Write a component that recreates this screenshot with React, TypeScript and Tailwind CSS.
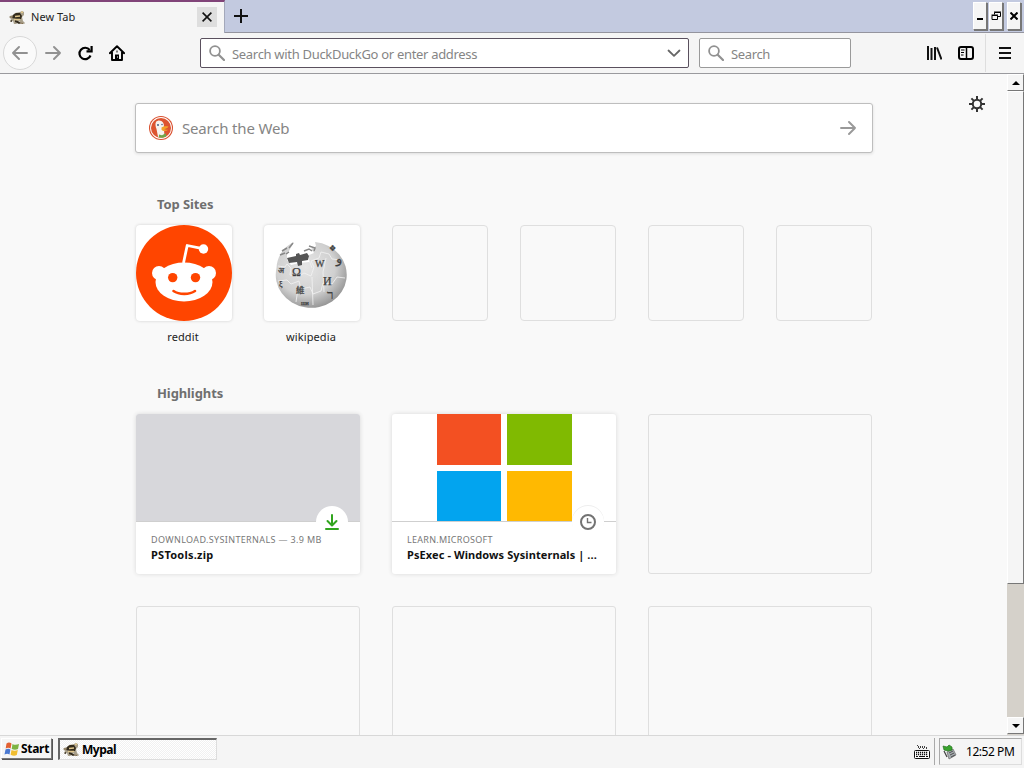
import type { ReactNode } from "react";

const raised =
  "border border-t-white border-l-white border-r-[#777] border-b-[#777] bg-[#f5f5f5]";

function TurtleIcon({ className }: { className?: string }) {
  return (
    <svg viewBox="0 0 16 16" className={className}>
      <path d="M1 6l3-1 2-2 5-1 2-1 2 1v3l-2 2 1 4 2 2-1 1-3-1-2-2-3 1 1 2H5l-1-3-3 1 1-3-2-2z" fill="#a9a08b" />
      <path d="M4 5l3-2h4l2 3-1 3H7L3 8zM6 10l3 1 3 2-2 1-4-2zM1 11l2-1v2z" fill="#332b1c" />
      <path d="M6 6.500l5-.5M5 9.500h6M12 2.500l2-.5" stroke="#dfc68d" strokeWidth="1.300" />
      <path d="M1 7h3M11 13l3 .5" stroke="#7d6849" strokeWidth="1.200" />
    </svg>
  );
}

function SearchIcon({ className }: { className?: string }) {
  return (
    <svg viewBox="0 0 16 16" className={className} fill="none" stroke="#919191">
      <circle cx="6" cy="6" r="4.900" strokeWidth="1.800" />
      <path d="M9.700 9.700l5.300 5.300" strokeWidth="2.200" strokeLinecap="round" />
    </svg>
  );
}

function ArrowIcon({ className }: { className?: string }) {
  return (
    <svg viewBox="0 0 16 16" className={className} fill="none" stroke="currentColor" strokeWidth="1.900" strokeLinecap="round" strokeLinejoin="round">
      <path d="M1 8h14M9 2l6 6-6 6" />
    </svg>
  );
}

function DuckIcon() {
  return (
    <svg viewBox="0 0 24 24" className="h-6 w-6">
      <circle cx="12" cy="12" r="12" fill="#d9502f" />
      <circle cx="12" cy="12" r="10.900" fill="#fff" />
      <circle cx="12" cy="12" r="10" fill="#dd5430" />
      <path d="M7 6C8.500 3.800 12.500 4 14 6.500c1.300 2 .9 3.500.9 5.500l.6 8.500c-2 1.200-5 1.200-6.500.3L7.500 13C6.500 10.500 6 8 7 6z" fill="#f6f2ee" />
      <path d="M12.500 11.500c2-1.600 4.500-1.300 7-1-.5 1.800-3 2-4.300 2.700 1.300.7 3.200.2 3.800.6-1.400 1.700-5.500 1.500-6.500-.1z" fill="#f3a229" />
      <path d="M10 18.500l3 .8 3.800-2 .5 3.200-3.500 1.200-4-.3z" fill="#71a64b" />
      <circle cx="9" cy="9" r=".9" fill="#34517a" />
      <circle cx="13" cy="8.500" r=".7" fill="#34517a" />
    </svg>
  );
}

function RedditIcon() {
  return (
    <svg viewBox="0 0 96 96" className="h-24 w-24">
      <circle cx="48" cy="48" r="48" fill="#ff4500" />
      <path d="M47.500 38l3.700-17.500 13 2.600" fill="none" stroke="#fff" strokeWidth="2.800" strokeLinejoin="round" />
      <circle cx="67.500" cy="24" r="4.700" fill="#fff" />
      <circle cx="23" cy="48" r="7" fill="#fff" />
      <circle cx="73" cy="48" r="7" fill="#fff" />
      <ellipse cx="48" cy="57" rx="28.500" ry="19.500" fill="#fff" />
      <circle cx="36.700" cy="52.600" r="4.700" fill="#ff4500" />
      <circle cx="59.500" cy="52.600" r="4.700" fill="#ff4500" />
      <path d="M37.500 66c5.500 3.800 16 3.800 21.500 0" fill="none" stroke="#ff4500" strokeWidth="2.600" strokeLinecap="round" />
    </svg>
  );
}

function WikipediaIcon() {
  return (
    <svg viewBox="0 0 94 94" className="h-[94px] w-[94px]">
      <defs>
        <radialGradient id="globe" cx=".42" cy=".38" r=".64">
          <stop offset="0" stopColor="#e6e6e6" />
          <stop offset=".65" stopColor="#d0d0d0" />
          <stop offset="1" stopColor="#969696" />
        </radialGradient>
      </defs>
      <path d="M29 16l-4 7-3 6v5l4 5 8-2 10-1v-7l5-2-3-4 5-3-1-4A35.500 33 0 1111.500 42C12 31 18 21 29 16z" fill="url(#globe)" />
      <path d="M13 40l7 1 2-3 4 4-1 7 8 2 6-4 7 3 3-9-3-6 8-3 2-6 8 2 3 5 9 1M13 55l9-1 4 4 8-3 2 8 9-2 3 7 8-3 2-8 9 1 5-7 8 1M44 34l3 8M47 51l1 28M61 32l-3 14 1 20M33 62l-2 14" fill="none" stroke="#f2f2f2" strokeWidth=".8" />
      <path d="M22 32l9-2v-2l3-1 1 2 7-2 2 3-1 4-6 1v4l-4 1-1-4-8 1z" fill="#555" />
      <path d="M28 17l-4 5M22 22l-5 3M20 27l-5 2M24 26l-3 2M39 25l5-2 3 2M44 20l6 2-1 3" stroke="#888" strokeWidth="1.500" fill="none" />
      <g fill="#3f3f3f" stroke="#3f3f3f" strokeWidth=".25" className="font-['Liberation_Serif',serif]">
        <text x="27" y="50" fontSize="12">Ω</text>
        <text x="50" y="41" fontSize="10">W</text>
        <text x="58" y="59" fontSize="12">И</text>
        <text x="31" y="67" fontSize="8.500" className="font-['Noto_Sans_CJK_SC',sans-serif]">維</text>
        <text x="62" y="73" fontSize="13">ר</text>
        <text x="71" y="37" fontSize="13">و</text>
        <text x="64" y="25" fontSize="8">❖</text>
        <text x="13" y="47" fontSize="8">अ</text>
        <text x="14" y="61" fontSize="8">ξ</text>
        <text x="36" y="79" fontSize="6">ши</text>
      </g>
    </svg>
  );
}

function WindowButton({ children, className }: { children: ReactNode; className?: string }) {
  return (
    <div className={`flex h-[28px] items-center justify-center ${raised} shadow-[1px_1px_0_#777] ${className}`}>
      {children}
    </div>
  );
}

function TabBar() {
  return (
    <div className="flex h-[33px] border-b border-[#94949e] bg-[#c3cae0]">
      <div className="flex h-[33px] w-[225px] items-center border-t-2 border-r border-t-[#814479] border-r-[#a3a8ba] bg-[#f5f5f5] pr-[7px] pl-[9px]">
        <TurtleIcon className="h-4 w-4" />
        <span className="ml-1.5 text-[11px] tracking-[0.05px] text-[#222]">New Tab</span>
        <div className="mb-[2px] ml-auto flex h-[20px] w-[20px] items-center justify-center bg-[#dedede]">
          <svg viewBox="0 0 10 10" className="h-2.5 w-2.5" stroke="#111" strokeWidth="1.600">
            <path d="M.6.6l8.800 8.800M9.400.6L.6 9.400" />
          </svg>
        </div>
      </div>
      <svg viewBox="0 0 14 14" className="mt-[9px] ml-[9px] h-3.5 w-3.5" stroke="#111" strokeWidth="2">
        <path d="M7 0v14M0 7h14" />
      </svg>
      <div className="mt-[2px] mr-[3px] ml-auto flex">
        <WindowButton className="w-[14px]">
          <div className="mt-[5px] h-[2px] w-[6px] bg-black" />
        </WindowButton>
        <WindowButton className="ml-[2px] w-[14px]">
          <svg viewBox="0 0 10 10" className="h-2.5 w-2.5 shrink-0" fill="none" stroke="#000">
            <path d="M3.500 3.500V1.500h6v4H7M3 1h7" />
            <path d="M1 4.500h5.500v4H1zM.5 4h6.500" />
          </svg>
        </WindowButton>
        <WindowButton className="ml-[4px] w-[14px]">
          <svg viewBox="0 0 8 8" className="h-2 w-2 shrink-0" stroke="#000" strokeWidth="2">
            <path d="M.5.5l7 7M7.500.5l-7 7" />
          </svg>
        </WindowButton>
      </div>
    </div>
  );
}

function Toolbar() {
  return (
    <div className="flex h-[41px] items-center border-b border-[#9a9a9e] bg-[#f5f5f5] pl-[3px]">
      <div className="flex h-[34px] w-[34px] items-center justify-center rounded-full border border-[#d8d8d8] bg-[#fafafa] text-[#919191]">
        <ArrowIcon className="h-4 w-4 rotate-180" />
      </div>
      <ArrowIcon className="ml-2 h-4 w-4 text-[#919191]" />
      <svg viewBox="0 0 16 16" className="ml-4 h-4 w-4" fill="none" stroke="#000" strokeWidth="2.200">
        <path d="M13.500 10.500A5.700 5.700 0 1112.700 5" />
        <path d="M14.600 1v5.400H9.500" />
      </svg>
      <svg viewBox="0 0 16 16" className="ml-4 h-4 w-4">
        <path d="M.8 8.200L8 1.200l7.200 7M3 7v8h10V7" fill="none" stroke="#000" strokeWidth="1.900" strokeLinejoin="round" strokeLinecap="round" />
        <path d="M6 15V9.500h4V15zM7.500 5.500h1v2h-1z" />
        <path d="M8.500 11.500v1" stroke="#fff" />
      </svg>
      <div className="ml-[75px] flex h-[30px] w-[489px] items-center rounded-[2px] border border-[#5a505e] bg-white pr-[7px] pl-2">
        <SearchIcon className="h-4 w-4" />
        <span className="mt-[3px] ml-[7px] text-[13px] tracking-[-0.31px] whitespace-nowrap text-[#858585]">Search with DuckDuckGo or enter address</span>
        <svg viewBox="0 0 14 14" className="ml-auto h-3.5 w-3.5" fill="none" stroke="#666" strokeWidth="1.800" strokeLinecap="round" strokeLinejoin="round">
          <path d="M1.500 4.500L7 9.800l5.500-5.300" />
        </svg>
      </div>
      <div className="ml-[10px] flex h-[30px] w-[152px] items-center rounded-[2px] border border-[#9a9a9a] bg-white pl-2">
        <SearchIcon className="h-4 w-4" />
        <span className="mt-[3px] ml-[7px] text-[13px] tracking-[-0.35px] text-[#858585]">Search</span>
      </div>
      <svg viewBox="0 0 16 16" className="ml-[75px] h-4 w-4" stroke="#111" strokeWidth="2">
        <path d="M2 1v14M5.500 3v12M9 2v13M11 2.500l4.500 12" />
      </svg>
      <svg viewBox="0 0 16 16" className="ml-4 h-4 w-4" fill="none" stroke="#000">
        <rect x="1" y="2" width="14" height="12" rx="2" strokeWidth="2" />
        <path d="M8.500 2v12" strokeWidth="1.500" />
        <path d="M3 5h3.500M3 7.500h3M3 10h2.500" />
      </svg>
      <div className="ml-[11px] flex h-[38px] w-[38px] items-center border-l border-[#dedede] pl-[13px]">
        <svg viewBox="0 0 12 12" className="h-3 w-3" stroke="#111" strokeWidth="2">
          <path d="M0 1h12M0 6h12M0 11h12" />
        </svg>
      </div>
    </div>
  );
}

function SectionTitle({ children }: { children: ReactNode }) {
  return <h2 className="ml-[21px] h-[18px] text-[13px] leading-[18px] font-bold tracking-[-0.1px] text-[#6f6f6f]">{children}</h2>;
}

function TopSite({ label, children }: { label?: string; children?: ReactNode }) {
  if (!label) {
    return <div className="h-24 w-24 rounded-[4px] border border-[#dfdfdf]" />;
  }
  return (
    <div className="w-24">
      <div className="flex h-24 items-center justify-center overflow-hidden rounded-[4px] bg-white shadow-[0_0_3px_#ccc]">
        {children}
      </div>
      <div className="mt-2 mr-[2px] text-center text-[11px] leading-4 tracking-[0.1px] text-[#222]">{label}</div>
    </div>
  );
}

function Highlight({ source, title, image, badge, badgeClass }: { source: ReactNode; title: ReactNode; image: ReactNode; badge: ReactNode; badgeClass: string }) {
  return (
    <div className="relative h-40 overflow-hidden rounded-[3px] bg-white shadow-[0_0_4px_#d8d8d8]">
      <div className="h-[108px] border-b border-[#cfcfcf]">{image}</div>
      <div className={`absolute top-[92px] right-3 flex h-8 w-8 items-center justify-center rounded-full bg-white ${badgeClass}`}>
        {badge}
      </div>
      <div className="relative px-[15px] pt-[10px]">
        <div className="h-[15px] text-[9px] leading-[15px] whitespace-nowrap text-[#777]">{source}</div>
        <div className="text-[11px] leading-4 font-bold whitespace-nowrap text-[#111]">{title}</div>
      </div>
    </div>
  );
}

function EmptyHighlight() {
  return <div className="h-40 rounded-[3px] border border-[#dfdfdf]" />;
}

function NewTabPage() {
  return (
    <main className="relative min-w-0 flex-1 overflow-hidden bg-[#f9f9f9]">
      <svg viewBox="0 0 16 16" className="absolute top-[22px] right-[22px] h-4 w-4" fill="none" stroke="#333">
        <circle cx="8" cy="8" r="4.200" strokeWidth="2" />
        <path d="M8 0v3.500M8 12.500V16M0 8h3.500M12.500 8H16M2.400 2.400l2.500 2.500M11.100 11.100l2.500 2.500M13.600 2.400l-2.500 2.500M4.900 11.100l-2.500 2.500" strokeWidth="2" />
      </svg>
      <div className="ml-[136px] w-[736px] pt-[29px]">
        <div className="-mx-px flex h-[50px] items-center rounded-[3px] border border-[#bebebe] bg-white pr-4 pl-[13px] shadow-[0_1px_3px_#ddd]">
          <DuckIcon />
          <span className="ml-[9px] text-[15px] tracking-[-0.18px] text-[#858585]">Search the Web</span>
          <ArrowIcon className="ml-auto h-4 w-4 text-[#999]" />
        </div>
        <div className="mt-[42px]">
          <SectionTitle>Top Sites</SectionTitle>
        </div>
        <div className="mt-3 flex h-[120px] gap-8">
          <TopSite label="reddit"><RedditIcon /></TopSite>
          <TopSite label="wikipedia"><WikipediaIcon /></TopSite>
          <TopSite />
          <TopSite />
          <TopSite />
          <TopSite />
        </div>
        <div className="mt-[39px]">
          <SectionTitle>Highlights</SectionTitle>
        </div>
        <div className="mt-3 grid grid-cols-3 gap-8">
          <Highlight
            source={<span className="tracking-[0.36px]">DOWNLOAD.SYSINTERNALS — 3.9 MB</span>}
            title={<span className="tracking-[0.25px]">PSTools.zip</span>}
            image={<div className="h-full bg-[#d7d7db]" />}
            badgeClass="border-transparent"
            badge={
              <svg viewBox="0 0 16 16" className="h-4 w-4" fill="none" stroke="#30a51e" strokeWidth="2" strokeLinecap="round" strokeLinejoin="round">
                <path d="M8 1v10M3.500 7L8 11.500 12.500 7M2 15h12" />
              </svg>
            }
          />
          <Highlight
            source={<span className="tracking-[0.29px]">LEARN.MICROSOFT</span>}
            title={<span className="tracking-[0.09px]">PsExec - Windows Sysinternals | ...</span>}
            image={
              <div className="mx-auto grid h-full w-[135px] grid-cols-2 gap-[6px]">
                <div className="bg-[#f35022]" />
                <div className="bg-[#80ba01]" />
                <div className="bg-[#02a4ef]" />
                <div className="bg-[#ffb901]" />
              </div>
            }
            badgeClass="shadow-[0_-1px_0_#eee]"
            badge={
              <svg viewBox="0 0 16 16" className="h-4 w-4" fill="none" stroke="#737373">
                <circle cx="8" cy="8" r="7" strokeWidth="2" />
                <path d="M7.500 4v4.500h4" strokeWidth="1.400" />
              </svg>
            }
          />
          <EmptyHighlight />
          <EmptyHighlight />
          <EmptyHighlight />
          <EmptyHighlight />
        </div>
      </div>
    </main>
  );
}

function Scrollbar() {
  return (
    <div className="flex w-[17px] flex-col bg-[#d5d1ca]">
      <div className={`flex h-[17px] items-center justify-center ${raised}`}>
        <svg viewBox="0 0 8 4" className="h-1 w-2"><path d="M4 0l4 4H0z" /></svg>
      </div>
      <div className={`h-[493px] ${raised}`} />
      <div className={`mt-auto mb-px flex h-[17px] items-center justify-center ${raised}`}>
        <svg viewBox="0 0 8 4" className="h-1 w-2"><path d="M0 0h8L4 4z" /></svg>
      </div>
    </div>
  );
}

function Taskbar() {
  return (
    <div className="flex h-[33px] items-start border-t border-[#d8d8d8] bg-[#f5f5f5] pt-[2px] pl-px">
      <div className={`flex h-[21px] w-[51px] items-center pl-[2px] ${raised} shadow-[1px_1px_0_#555]`}>
        <svg viewBox="0 0 16 16" className="h-4 w-4 shrink-0">
          <path d="M2.500 2.500C4.500 1 6 1.500 7.500 2.500L6.600 7.500C5 6.500 3.500 6.500 1.700 7.500z" fill="#e36132" />
          <path d="M8.500 3C10.500 4.200 12.500 4 15 3l-1 5c-2 1-4 1-6.300 0z" fill="#7cb342" />
          <path d="M1.500 8.500C3.500 7.500 5 7.500 6.400 8.500l-.9 5C4 12.500 2.500 12.500.5 13.500z" fill="#4978d0" />
          <path d="M7.500 9c2 1 4 1 6.300 0l-1 5c-2 1-4 .800-6.200-.2z" fill="#f0bd30" />
        </svg>
        <span className="ml-px text-[12px] leading-5 font-bold tracking-[-0.3px]">Start</span>
      </div>
      <div className="ml-[6px] flex h-[22px] w-[159px] items-center border-t-2 border-l-2 border-r border-b border-t-[#666] border-r-[#ddd] border-b-[#ddd] border-l-[#666] bg-[repeating-conic-gradient(#f1f1f1_0_25%,#fff_0_50%)] bg-size-[2px_2px] pl-[3px]">
        <TurtleIcon className="h-4 w-4" />
        <span className="ml-[3px] text-[12px] leading-5 font-bold tracking-[-0.5px]">Mypal</span>
      </div>
      <svg viewBox="0 0 16 14" className="mt-[7px] ml-auto h-[14px] w-4" fill="none" stroke="#111">
        <path d="M4.500 1v2M6.500 1v2M8.500 1v2M10.500 1v2M12.500 2v2M3.500 0v1M5.500 3v1M9.500 3v1" strokeWidth=".8" />
        <rect x=".5" y="5.500" width="15" height="8" rx="1" fill="#fff" />
        <path d="M2 7.500h12M2 9.500h12" strokeDasharray="1.200 .8" strokeWidth="1.300" />
        <path d="M2 11.500h2M5 11.500h6M12 11.500h2" />
      </svg>
      <div className="ml-1 h-[27px] w-px bg-[#aaa]" />
      <div className="mr-[2px] ml-1 flex h-[27px] w-[83px] items-center border border-[#aaa] border-r-[#ddd] border-b-[#ddd] pl-[2px]">
        <svg viewBox="0 0 16 16" className="h-4 w-4">
          <path d="M5 8l6-3 3 6-7 4z" fill="#a9afb3" stroke="#666" strokeWidth=".7" />
          <path d="M7 9l4-2M8 11l4-2M9 13l4-2" stroke="#444" strokeWidth=".9" />
          <path d="M1 2l4 1 2-2 3 2v3L6 7 2 6z" fill="#39a42d" stroke="#287222" strokeWidth=".7" />
          <path d="M2 7l3 6" stroke="#444" strokeWidth="1.300" />
        </svg>
        <span className="ml-[8px] text-[12px] tracking-[-0.45px] whitespace-nowrap">12:52 PM</span>
      </div>
    </div>
  );
}

export default function App() {
  return (
    <div className="flex h-[768px] w-[1024px] flex-col overflow-hidden bg-[#f9f9f9] font-['Noto_Sans',sans-serif]">
      <TabBar />
      <Toolbar />
      <div className="flex h-[661px]">
        <NewTabPage />
        <Scrollbar />
      </div>
      <Taskbar />
    </div>
  );
}
